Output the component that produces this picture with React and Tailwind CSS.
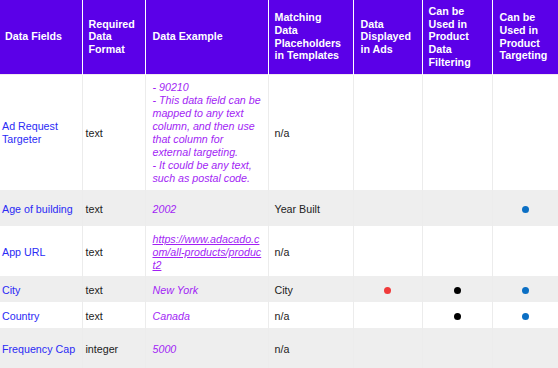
import React from "react";

const headers = [
  { label: "Data Fields", pad: "pl-[5px] pr-[3px]" },
  { label: "Required Data Format", pad: "pl-[6px] pr-[3px]" },
  { label: "Data Example", pad: "pl-[7px] pr-[3px]" },
  { label: "Matching Data Placeholders in Templates", pad: "pl-[6px] pr-[10px]" },
  { label: "Data Displayed in Ads", pad: "pl-[7px] pr-[3px]" },
  { label: "Can be Used in Product Data Filtering", pad: "pl-[6px] pr-[3px]" },
  { label: "Can be Used in Product Targeting", pad: "pl-[7px] pr-[3px]" },
];

const rows = [
  {
    field: "Ad Request Targeter",
    format: "text",
    example: [
      "- 90210",
      "- This data field can be",
      "mapped to any text",
      "column, and then use",
      "that column for",
      "external targeting.",
      "- It could be any text,",
      "such as postal code.",
    ],
    match: "n/a",
    h: "h-[116px]",
    gray: false,
  },
  { field: "Age of building", format: "text", example: ["2002"], match: "Year Built", target: true, h: "h-[36px]", gray: true },
  {
    field: "App URL",
    format: "text",
    example: ["https://www.adacado.c", "om/all-products/produc", "t2"],
    link: true,
    match: "n/a",
    h: "h-[50px]",
    gray: false,
  },
  { field: "City", format: "text", example: ["New York"], match: "City", ads: true, filter: true, target: true, h: "h-[26px]", gray: true },
  { field: "Country", format: "text", example: ["Canada"], match: "n/a", filter: true, target: true, h: "h-[26px]", gray: false },
  { field: "Frequency Cap", format: "integer", example: ["5000"], match: "n/a", h: "h-[41px]", gray: true },
];

function Dot({ color }) {
  return <span className={`inline-block w-[7px] h-[7px] rounded-full ${color}`} />;
}

export default function App() {
  return (
    <div className="w-[558px] h-[368px] overflow-hidden bg-white font-['Liberation_Sans',Arial,sans-serif] text-[10.7px]">
      <table className="w-[558px] table-fixed border-collapse">
        <colgroup>
          <col className="w-[82px]" />
          <col className="w-[63px]" />
          <col className="w-[123px]" />
          <col className="w-[85px]" />
          <col className="w-[69px]" />
          <col className="w-[70px]" />
          <col className="w-[66px]" />
        </colgroup>
        <thead>
          <tr className="h-[74px] bg-[#5b00e8] border-b border-[#f3e8f0]">
            {headers.map((hd, i) => (
              <th
                key={i}
                className={`${hd.pad} text-left align-middle font-bold text-white leading-[12.7px] ${i < 6 ? "border-r border-white" : ""}`}
              >
                {hd.label}
              </th>
            ))}
          </tr>
        </thead>
        <tbody>
          {rows.map((r, i) => (
            <tr key={i} className={`${r.h} ${r.gray ? "bg-[#eeeeee]" : "bg-white"}`}>
              <td className="pl-[2px] pt-[2px] align-middle text-[#2b2bf5] leading-[13px] border-r border-[#ececec]">{r.field}</td>
              <td className="pl-[3px] pt-[2px] align-middle text-[#222] leading-[13px] border-r border-[#ececec]">{r.format}</td>
              <td className="pl-[7px] pt-[2px] align-middle italic text-[#a21ff5] leading-[13px] border-r border-[#ececec]">
                {r.example.map((line, j) => (
                  <span key={j} className={r.link ? "underline" : ""}>
                    {line}
                    {j < r.example.length - 1 && <br />}
                  </span>
                ))}
              </td>
              <td className="pl-[6px] pt-[2px] align-middle text-[#222] leading-[13px] border-r border-[#ececec]">{r.match}</td>
              <td className="pt-[2px] text-center align-middle border-r border-[#ececec]">{r.ads && <Dot color="bg-[#f03a3a]" />}</td>
              <td className="pt-[2px] text-center align-middle border-r border-[#ececec]">{r.filter && <Dot color="bg-black" />}</td>
              <td className="pt-[2px] text-center align-middle">{r.target && <Dot color="bg-[#0b6fc4]" />}</td>
            </tr>
          ))}
        </tbody>
      </table>
    </div>
  );
}
